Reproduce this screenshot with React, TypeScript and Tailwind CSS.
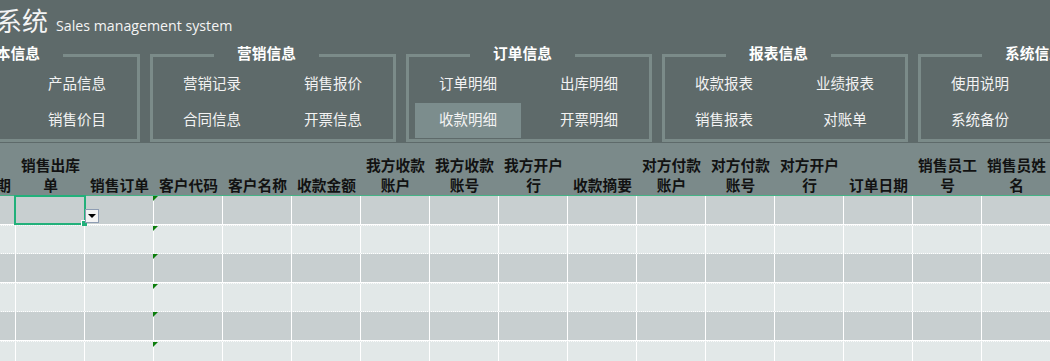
import React from 'react';

const panels: { title: string; items: string[]; active?: number }[] = [
  { title: '基本信息', items: ['客户信息', '产品信息', '员工信息', '销售价目'] },
  { title: '营销信息', items: ['营销记录', '销售报价', '合同信息', '开票信息'] },
  { title: '订单信息', items: ['订单明细', '出库明细', '收款明细', '开票明细'], active: 2 },
  { title: '报表信息', items: ['收款报表', '业绩报表', '销售报表', '对账单'] },
  { title: '系统信息', items: ['使用说明', '修改密码', '系统备份', '退出系统'] },
];

const headers = [
  '收款日期',
  '销售出库单',
  '销售订单',
  '客户代码',
  '客户名称',
  '收款金额',
  '我方收款账户',
  '我方收款账号',
  '我方开户行',
  '收款摘要',
  '对方付款账户',
  '对方付款账号',
  '对方开户行',
  '订单日期',
  '销售员工号',
  '销售员姓名',
];

function Panel({ title, items, active }: { title: string; items: string[]; active?: number }) {
  return (
    <div className="relative w-[246px] h-[88px] shrink-0 border-[3px] border-[#7b8b89]">
      <div className="absolute left-[61px] top-[-14px] w-[105px] h-[20px] bg-[#5e6a6a] text-center text-[14.7px] font-bold leading-[20px] text-white">
        {title}
      </div>
      <div className="grid grid-cols-[106px_106px] gap-x-[15px] gap-y-[1px] pl-[6px] pt-[10px]">
        {items.map((it, i) => (
          <div
            key={i}
            className={
              'h-[35px] pb-[4px] flex items-center justify-center text-[14.5px] leading-[20px] text-[#f3f3f3] ' +
              (active === i ? 'bg-[#7c8d8d]' : '')
            }
          >
            {it}
          </div>
        ))}
      </div>
    </div>
  );
}

export default function App() {
  const rows = [0, 1, 2, 3, 4, 5];
  return (
    <div className="w-[1050px] h-[361px] overflow-hidden bg-[#e2e8e8] [font-family:'Noto_Sans_CJK_SC','Noto_Sans',sans-serif]">
      <div className="h-[143px] bg-[#5e6a6a] overflow-hidden">
        <div className="h-[54px] whitespace-nowrap ml-[-108px] leading-[39px] text-[#f4f4f4]">
          <span className="text-[26px]">销售管理系统</span>
          <span className="ml-[8px] text-[14.2px] [font-family:'Open_Sans','Noto_Sans',sans-serif]">
            Sales management system
          </span>
        </div>
        <div className="flex gap-[10px] ml-[-106px]">
          {panels.map((p, i) => (
            <Panel key={i} {...p} />
          ))}
        </div>
      </div>

      <div className="flex ml-[-53px] h-[53px] pb-[1px] bg-[#7b8a8a] border-b border-[#45b386]">
        {headers.map((h, i) => (
          <div
            key={i}
            className="w-[69px] shrink-0 flex items-end justify-center text-center text-[14.7px] font-bold leading-[19.5px] text-[#121212]"
          >
            {h}
          </div>
        ))}
      </div>

      {rows.map((r) => (
        <div
          key={r}
          className={
            'flex ml-[-53px] h-[29px] border-b border-white ' +
            (r % 2 === 0 ? 'bg-[#c8cfd0]' : 'bg-[#e2e8e8] border-t border-t-white/80 border-dotted')
          }
        >
          {headers.map((_, c) => (
            <div key={c} className="relative w-[69px] shrink-0 h-full border-r border-solid border-white">
              {c === 3 && (
                <div className="absolute left-[-1px] top-0 w-0 h-0 border-t-[5px] border-r-[5px] border-solid border-t-[#0b7d0b] border-r-transparent" />
              )}
              {c === 1 && r === 0 && (
                <>
                  <div className="absolute left-[-2px] top-[-1px] w-[72px] h-[30px] border-2 border-solid border-[#22b07a] z-10" />
                  <div className="absolute left-[65px] top-[24px] w-[6px] h-[6px] bg-[#22b07a] border-l border-t border-solid border-white z-20" />
                  <div className="absolute left-[69px] top-[13px] w-[14px] h-[14px] bg-[#f3f3f3] border border-solid border-[#8e9db3] z-20 flex items-center justify-center">
                    <div className="w-0 h-0 border-l-[4px] border-r-[4px] border-t-[4px] border-solid border-l-transparent border-r-transparent border-t-black" />
                  </div>
                </>
              )}
            </div>
          ))}
        </div>
      ))}
    </div>
  );
}
